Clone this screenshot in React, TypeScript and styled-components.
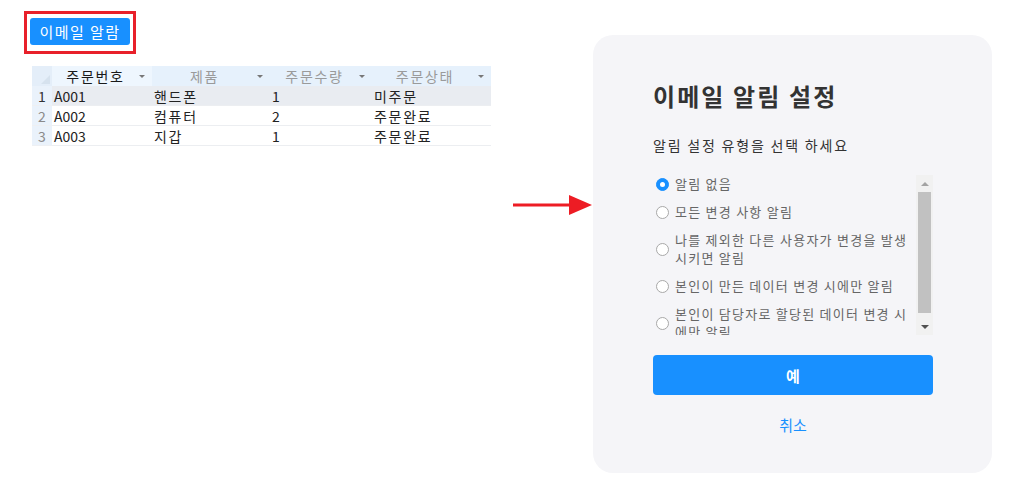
import styled, { createGlobalStyle } from 'styled-components';

const GlobalStyle = createGlobalStyle`
    html, body {
        margin: 0;
        padding: 0;
        background: #ffffff;
    }
    body {
        font-family: 'Noto Sans CJK KR', 'Noto Sans', sans-serif;
        color: #222;
    }
`;

interface Order {
    no: string;
    product: string;
    qty: number;
    status: string;
}

const orders: Order[] = [
    { no: 'A001', product: '핸드폰', qty: 1, status: '미주문' },
    { no: 'A002', product: '컴퓨터', qty: 2, status: '주문완료' },
    { no: 'A003', product: '지갑', qty: 1, status: '주문완료' },
];

const columns = [
    { title: '주문번호', active: true },
    { title: '제품', active: false },
    { title: '주문수량', active: false },
    { title: '주문상태', active: false },
];

const options = [
    '알림 없음',
    '모든 변경 사항 알림',
    '나를 제외한 다른 사용자가 변경을 발생 시키면 알림',
    '본인이 만든 데이터 변경 시에만 알림',
    '본인이 담당자로 할당된 데이터 변경 시에만 알림',
];

export default function App(): JSX.Element {
    return (
        <>
            <GlobalStyle />
            <Page>
                <LeftArea>
                    <AlertFrame>
                        <AlertButton>이메일 알람</AlertButton>
                    </AlertFrame>
                    <Grid>
                        <CornerCell />
                        {columns.map((c) => (
                            <HeaderCell key={c.title} $active={c.active}>
                                <HeaderText>{c.title}</HeaderText>
                                <SortCaret />
                            </HeaderCell>
                        ))}
                        {orders.map((o, i) => {
                            const selected = i === 0;
                            return (
                                <Row key={o.no}>
                                    <RowNumber $selected={selected}>{i + 1}</RowNumber>
                                    <DataCell $selected={selected}>{o.no}</DataCell>
                                    <DataCell $selected={selected} $hangul>
                                        {o.product}
                                    </DataCell>
                                    <DataCell $selected={selected}>{o.qty}</DataCell>
                                    <DataCell $selected={selected} $hangul>
                                        {o.status}
                                    </DataCell>
                                </Row>
                            );
                        })}
                    </Grid>
                </LeftArea>

                <Arrow width="80" height="24" viewBox="0 0 80 24">
                    <line x1="0" y1="12" x2="58" y2="12" stroke="#ed1c24" strokeWidth="3" />
                    <polygon points="56,2 79,12 56,22" fill="#ed1c24" />
                </Arrow>

                <Panel>
                    <Title>이메일 알림 설정</Title>
                    <Subtitle>알림 설정 유형을 선택 하세요</Subtitle>
                    <ScrollArea>
                        <OptionList>
                            {options.map((label, i) => (
                                <OptionItem key={label}>
                                    <Radio $checked={i === 0} />
                                    <OptionLabel>{label}</OptionLabel>
                                </OptionItem>
                            ))}
                        </OptionList>
                        <ScrollBar>
                            <ScrollButton>
                                <Caret $dir="up" />
                            </ScrollButton>
                            <ScrollTrack>
                                <ScrollThumb />
                            </ScrollTrack>
                            <ScrollButton>
                                <Caret $dir="down" />
                            </ScrollButton>
                        </ScrollBar>
                    </ScrollArea>
                    <ConfirmButton>예</ConfirmButton>
                    <CancelLink>취소</CancelLink>
                </Panel>
            </Page>
        </>
    );
}

const Page = styled.div`
    display: flex;
    align-items: flex-start;
    width: 1034px;
    height: 502px;
`;

const LeftArea = styled.div`
    width: 489px;
    padding: 11px 0 0 24px;
    display: flex;
    flex-direction: column;
    align-items: flex-start;
`;

const AlertFrame = styled.div`
    display: flex;
    border: 3px solid #e8202a;
    padding: 4px 3px 6px;
`;

const AlertButton = styled.button`
    font-family: 'Noto Sans CJK KR', sans-serif;
    font-size: 15px;
    letter-spacing: 1.4px;
    line-height: 21px;
    height: 27px;
    width: 100px;
    padding: 0;
    color: #ffffff;
    background: #1890ff;
    border: none;
    border-radius: 3px;
    cursor: pointer;
`;

const Grid = styled.div`
    margin: 12px 0 0 8px;
    display: grid;
    grid-template-columns: 20px 100px 118px 102px 119px;
    grid-auto-rows: 20px;
    width: 459px;
    font-size: 14px;
    line-height: 20px;
`;

const CornerCell = styled.div`
    position: relative;
    background: #e4eef9;
    &::after {
        content: '';
        position: absolute;
        right: 2px;
        bottom: 2px;
        border-left: 9px solid transparent;
        border-bottom: 9px solid #d6e2ee;
    }
`;

const HeaderCell = styled.div<{ $active: boolean }>`
    display: flex;
    align-items: center;
    padding-right: 7px;
    background: ${(p) => (p.$active ? '#eef6fe' : '#e6f1fc')};
    color: ${(p) => (p.$active ? '#1a1a1a' : '#9a9a9a')};
`;

const HeaderText = styled.span`
    flex: 1;
    text-align: center;
    letter-spacing: 1.7px;
`;

const SortCaret = styled.span`
    width: 0;
    height: 0;
    border-left: 3px solid transparent;
    border-right: 3px solid transparent;
    border-top: 3px solid #777;
    margin-top: 1px;
`;

const Row = styled.div`
    display: contents;
`;

const RowNumber = styled.div<{ $selected: boolean }>`
    background: #eaf2fb;
    color: ${(p) => (p.$selected ? '#333' : '#8a8a8a')};
    text-align: center;
    border-bottom: 1px solid #eef0f3;
    box-sizing: border-box;
`;

const DataCell = styled.div<{ $selected: boolean; $hangul?: boolean }>`
    padding-left: 2px;
    background: ${(p) => (p.$selected ? '#e9ecf1' : '#ffffff')};
    color: #222;
    letter-spacing: ${(p) => (p.$hangul ? '1.7px' : '0')};
    border-bottom: 1px solid #eceef1;
    box-sizing: border-box;
    white-space: nowrap;
`;

const Arrow = styled.svg`
    margin-top: 193px;
    flex-shrink: 0;
`;

const Panel = styled.div`
    margin-top: 35px;
    width: 399px;
    height: 438px;
    box-sizing: border-box;
    padding: 45px 59px 0 60px;
    background: #f5f5f8;
    border-radius: 20px;
    display: flex;
    flex-direction: column;
`;

const Title = styled.h1`
    margin: 0;
    font-size: 24px;
    line-height: 32px;
    font-weight: 700;
    letter-spacing: 2.1px;
    color: #333;
`;

const Subtitle = styled.p`
    margin: 23px 0 0;
    font-size: 14px;
    line-height: 20px;
    letter-spacing: 1.8px;
    color: #333;
`;

const ScrollArea = styled.div`
    margin-top: 20px;
    height: 160px;
    display: flex;
`;

const OptionList = styled.div`
    flex: 1;
    min-width: 0;
    overflow: hidden;
    padding-left: 3px;
`;

const ScrollBar = styled.div`
    width: 17px;
    flex-shrink: 0;
    display: flex;
    flex-direction: column;
    background: #f1f1f1;
`;

const ScrollButton = styled.div`
    height: 17px;
    display: flex;
    align-items: center;
    justify-content: center;
`;

const ScrollTrack = styled.div`
    flex: 1;
    padding: 0 2px;
`;

const ScrollThumb = styled.div`
    height: 121px;
    background: #c1c1c1;
`;

const Caret = styled.span<{ $dir: 'up' | 'down' }>`
    width: 0;
    height: 0;
    border-left: 4px solid transparent;
    border-right: 4px solid transparent;
    ${(p) =>
        p.$dir === 'up'
            ? 'border-bottom: 4px solid #a3a3a3; margin-top: 1px;'
            : 'border-top: 4px solid #505050; margin-top: 1px;'}
`;

const OptionItem = styled.label`
    display: flex;
    align-items: center;
    gap: 6px;
    margin-bottom: 10px;
    cursor: pointer;
`;

const Radio = styled.span<{ $checked: boolean }>`
    flex-shrink: 0;
    width: 13px;
    height: 13px;
    box-sizing: border-box;
    border-radius: 50%;
    border: 1px solid ${(p) => (p.$checked ? '#1890ff' : '#a8a8a8')};
    background: ${(p) => (p.$checked ? '#1890ff' : '#ffffff')};
    display: flex;
    align-items: center;
    justify-content: center;
    &::after {
        content: '';
        width: 5px;
        height: 5px;
        border-radius: 50%;
        background: #ffffff;
        display: ${(p) => (p.$checked ? 'block' : 'none')};
    }
`;

const OptionLabel = styled.span`
    font-size: 13px;
    line-height: 18px;
    letter-spacing: 1.25px;
    color: #666;
`;

const ConfirmButton = styled.button`
    margin-top: 20px;
    height: 40px;
    width: 100%;
    border: none;
    border-radius: 4px;
    background: #1890ff;
    color: #ffffff;
    font-family: 'Noto Sans CJK KR', sans-serif;
    font-size: 15px;
    font-weight: 700;
    cursor: pointer;
`;

const CancelLink = styled.a`
    margin-top: 20px;
    text-align: center;
    font-size: 15px;
    line-height: 20px;
    color: #1890ff;
    cursor: pointer;
`;
